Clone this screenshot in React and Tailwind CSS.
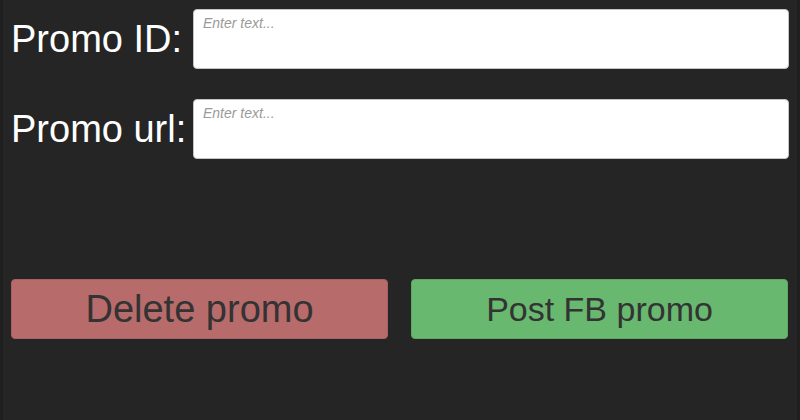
import React from 'react';

const Field = ({ label }) => (
  <div className="flex items-center h-[60px]">
    <label className="w-[182px] shrink-0 text-[38px] leading-none text-white whitespace-nowrap">{label}</label>
    <input
      type="text"
      placeholder="Enter text..."
      className="flex-1 h-[60px] bg-white border border-[#c4c4c4] rounded-[4px] px-[9px] pt-[5px] pb-[37px] text-[14px] leading-[16px] italic text-[#333] placeholder:text-[#9a9a9a] outline-none"
    />
  </div>
);

const App = () => {
  return (
    <div
      className="w-[800px] h-[420px] bg-[#252525] border-l-[3px] border-r-[3px] border-[#1f1f1f] pl-[8px] pr-[8px] pt-[9px] flex flex-col"
      style={{ fontFamily: '"Liberation Sans", Arial, sans-serif' }}
    >
      <div className="flex flex-col gap-[30px]">
        <Field label="Promo ID:" />
        <Field label="Promo url:" />
      </div>

      <div className="mt-[120px] flex gap-[23px] pr-[1px]">
        <button className="flex-1 h-[60px] bg-[#b86b6b] border border-[#a86060] rounded-[4px] text-[38px] leading-none text-[#333333]">
          Delete promo
        </button>
        <button className="flex-1 h-[60px] bg-[#68b86f] border border-[#5ea866] rounded-[4px] text-[34px] leading-none text-[#333333]">
          Post FB promo
        </button>
      </div>
    </div>
  );
};

export default App;
